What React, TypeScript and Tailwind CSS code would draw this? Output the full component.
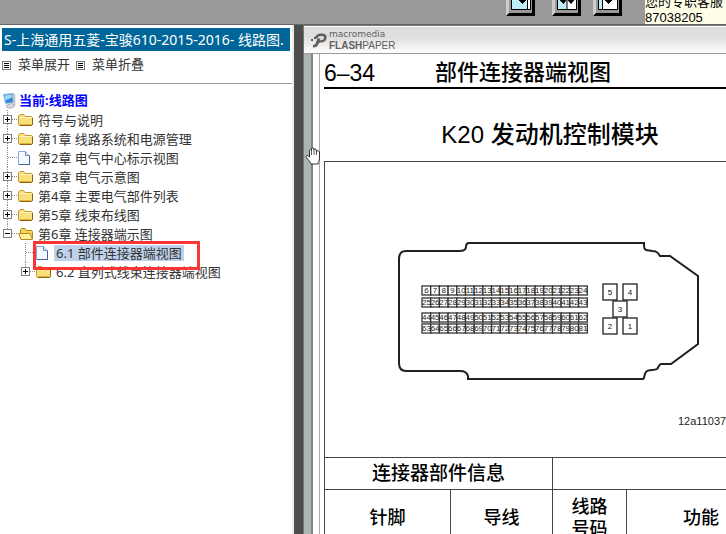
import React from 'react';

type TreeNode = {
  label: string;
  kind: 'folder' | 'open' | 'doc';
  toggle?: 'plus' | 'minus';
  last?: boolean;
  selected?: boolean;
  children?: TreeNode[];
};

const tree: TreeNode[] = [
  { label: '符号与说明', kind: 'folder', toggle: 'plus' },
  { label: '第1章 线路系统和电源管理', kind: 'folder', toggle: 'plus' },
  { label: '第2章 电气中心标示视图', kind: 'doc' },
  { label: '第3章 电气示意图', kind: 'folder', toggle: 'plus' },
  { label: '第4章 主要电气部件列表', kind: 'folder', toggle: 'plus' },
  { label: '第5章 线束布线图', kind: 'folder', toggle: 'plus' },
  {
    label: '第6章 连接器端示图',
    kind: 'open',
    toggle: 'minus',
    last: true,
    children: [
      { label: '6.1 部件连接器端视图', kind: 'doc', selected: true },
      { label: '6.2 直列式线束连接器端视图', kind: 'folder', toggle: 'plus', last: true },
    ],
  },
];

const Joint: React.FC<{ toggle?: 'plus' | 'minus'; last?: boolean }> = ({ toggle, last }) => (
  <svg width="18" height="19" viewBox="0 0 18 19" className="block" shapeRendering="crispEdges">
    <path d={last ? 'M7.5 0V9' : 'M7.5 0V19'} stroke="#8c8c8c" strokeDasharray="1 1" />
    <path d="M8 9.5H18" stroke="#8c8c8c" strokeDasharray="1 1" />
    {toggle && (
      <>
        <rect x="3.5" y="5.5" width="8" height="8" fill="#fff" stroke="#808080" />
        <path d={toggle === 'plus' ? 'M5 9.5H10M7.5 7V12' : 'M5 9.5H10'} stroke="#000" />
      </>
    )}
  </svg>
);

const FolderIcon = () => (
  <svg width="16" height="16" viewBox="0 0 16 16" className="block shrink-0">
    <path d="M.5 4L2 2.5H5.5L7 4.5H13.500L14.5 5.5V12.500L13.500 13.500H1.500L.5 12.500Z" fill="#fae07c" stroke="#c29a2c" />
    <path d="M1.500 5.500H13.500" stroke="#fff7c2" />
    <path d="M1.500 12.500H13.500" stroke="#e0b23a" />
    <path d="M2 13.500H13.500L14.500 12.500V6" fill="none" stroke="#8a6410" />
  </svg>
);

const OpenFolderIcon = () => (
  <svg width="16" height="16" viewBox="0 0 16 16" className="block shrink-0">
    <path d="M2.5 12.5V3.5L3.5 2.5H7L8.5 4.5H13.5L14.5 5.5V12.5Z" fill="#f3cf5b" stroke="#b58a1b" />
    <path d="M0.5 7.5H12L14.5 13.5H3Z" fill="#fff0a0" stroke="#b58a1b" />
  </svg>
);

const DocIcon = () => (
  <svg width="16" height="16" viewBox="0 0 16 16" className="block shrink-0">
    <path d="M.5 1.5H7.5L11.5 5.5V14.5H.5Z" fill="#f4f9ff" stroke="#8fa9d6" />
    <path d="M7.5 1.5V5.5H11.5" fill="#cfe0fa" stroke="#6f8fc4" />
    <path d="M1 14.5H11.5V6" fill="none" stroke="#4464a0" />
  </svg>
);

const ComputerIcon = () => (
  <svg width="16" height="18" viewBox="0 0 16 18" className="block shrink-0">
    <path d="M.5 2.500L9.500 1.500L10.500 10.500L2.500 11.500Z" fill="#2f86d6" stroke="#9cc0e2" />
    <path d="M1.500 3.500L8.500 2.500L9 5.500L2.500 8.500Z" fill="#9fd6fb" />
    <path d="M10 1L12 2.500V13L10.500 11Z" fill="#cfd6e2" stroke="#9aa5b8" strokeWidth=".5" />
    <path d="M3 13.500L8.500 11.500L12 13.500L9.500 16H4.500Z" fill="#d6dae4" stroke="#8c95a8" strokeWidth=".7" />
  </svg>
);

const nodeIcons = { folder: FolderIcon, open: OpenFolderIcon, doc: DocIcon };

const TreeItem: React.FC<{ node: TreeNode }> = ({ node }) => {
  const Icon = nodeIcons[node.kind];
  return (
    <li>
      <div className="relative flex h-[19px] items-center">
        {node.toggle ? (
          <button type="button" aria-label={node.label} className="shrink-0">
            <Joint toggle={node.toggle} last={node.last} />
          </button>
        ) : (
          <Joint last={node.last} />
        )}
        <Icon />
        <a
          href="#"
          className={node.selected ? 'ml-0.5 bg-[#bfd2ec] px-0.5 leading-4 whitespace-nowrap' : 'ml-1 leading-4 whitespace-nowrap'}
        >
          {node.label}
        </a>
        {node.selected && (
          <span className="pointer-events-none absolute -top-0.5 left-[15px] z-10 h-[29px] w-[167px] border-3 border-[#fb3434]"></span>
        )}
      </div>
      {node.children && (
        <ul className="pl-[18px]">
          {node.children.map((child) => (
            <TreeItem key={child.label} node={child} />
          ))}
        </ul>
      )}
    </li>
  );
};

const ListIcon = () => (
  <svg width="9" height="9" viewBox="0 0 9 9" className="shrink-0" shapeRendering="crispEdges">
    <rect x=".5" y=".5" width="8" height="8" fill="#fff" stroke="#777" />
    <path d="M2 2.5H7M2 4.5H7M2 6.5H7" stroke="#000" />
  </svg>
);

const Sidebar = () => (
  <aside className="w-[294px] shrink-0 overflow-hidden border-r-2 border-[#ececec] bg-white font-['Noto_Sans','Noto_Sans_CJK_SC',sans-serif] text-[13px] text-[#333]">
    <h1 className="mx-0.5 mt-[3px] h-[23px] overflow-hidden bg-[#006699] px-0.5 text-sm leading-6 whitespace-nowrap text-white">
      S-上海通用五菱-宝骏610-2015-2016- 线路图.
    </h1>
    <div className="flex h-[33px] items-center border-b border-[#999] px-0.5 pb-1">
      <button type="button" className="flex items-center gap-[7px]">
        <ListIcon />
        菜单展开
      </button>
      <button type="button" className="ml-1.5 flex items-center gap-[7px]">
        <ListIcon />
        菜单折叠
      </button>
    </div>
    <nav className="pt-[7px]">
      <a href="#" className="flex h-[19px] items-center pl-[3px] font-bold text-[#0000ff]">
        <ComputerIcon />
        当前:线路图
      </a>
      <ul>
        {tree.map((node) => (
          <TreeItem key={node.label} node={node} />
        ))}
      </ul>
    </nav>
  </aside>
);

const PageIcon: React.FC<{ kind: 'single' | 'double' | 'right' }> = ({ kind }) => (
  <svg width="20" height="20" viewBox="0 0 20 20" className="block">
    <rect x="1" y="1" width="18" height="18" fill="#fff" />
    {kind === 'single' && <rect x="1" y="1" width="15" height="18" fill="#bdeefa" />}
    {kind === 'double' && <rect x="1" y="1" width="9" height="18" fill="#bdeefa" />}
    {kind === 'right' && <rect x="1" y="1" width="3" height="18" fill="#bdeefa" />}
    <path d="M.5 0V19.5H19.5V0" fill="none" stroke="#000" />
    {kind === 'single' && <path d="M16.5 0V19M8 10H15L11.5 13.5Z" fill="#000" stroke="#000" />}
    {kind === 'double' && <path d="M10 0V19M3 10H9L6.500 13.5ZM11 10H17L14 13.5Z" fill="#000" stroke="#000" />}
    {kind === 'right' && <path d="M4.5 0V19M7 10H14L10.5 13.5Z" fill="#000" stroke="#000" />}
  </svg>
);

const toolClass =
  'mb-2 flex h-[29px] w-[29px] shrink-0 items-start justify-center border-3 border-t-[#ccc] border-r-black border-b-black border-l-[#ccc] bg-[#999]';

const TopBar = () => (
  <header className="flex h-[25px] shrink-0 items-end justify-end overflow-hidden border-b border-[#666] bg-[#999]">
    <button type="button" aria-label="单页" className={toolClass}><PageIcon kind="single" /></button>
    <button type="button" aria-label="双页" className={'ml-[17px] ' + toolClass}><PageIcon kind="double" /></button>
    <button type="button" aria-label="右页" className={'ml-3 ' + toolClass}><PageIcon kind="right" /></button>
    <p className="-mb-0.5 ml-[23px] w-[81px] shrink-0 bg-[#ffffe8] font-['Liberation_Sans','Noto_Sans_CJK_SC',sans-serif] text-[13px] leading-4 whitespace-nowrap text-black">
      您的专职客服<br />
      87038205
    </p>
  </header>
);

const pinRows = [
  { first: 6, y: 125 },
  { first: 25, y: 137 },
  { first: 44, y: 152 },
  { first: 63, y: 163 },
];

const bigPins = [
  { n: 5, x: 279, y: 123 },
  { n: 4, x: 299, y: 123 },
  { n: 3, x: 289, y: 140 },
  { n: 2, x: 279, y: 157 },
  { n: 1, x: 299, y: 157 },
];

const ConnectorDrawing = () => (
  <svg width="451" height="295" viewBox="1 1 451 295" className="block" fontFamily="Liberation Sans, sans-serif">
    <path
      d="M82 90H135C140 90 142 89 142 86C142 83 143 82 145 82H320V85C320 90 324 89 328 90C333 90 334 92 336 95H346L374 115V183L347 203H337C335 203 335 206 333 208C330 210 324 208 322 211C320 213 321 217 319 218H144V215C143 211 140 210 136 210H82Q75 210 75 202V98Q75 90 82 90Z"
      fill="none"
      stroke="#231f20"
      strokeWidth="2"
    />
    {pinRows.map((row) => (
      <g key={row.first}>
        {Array.from({ length: 19 }, (_, i) => (
          <g key={i}>
            <rect x={98 + i * 8.7} y={row.y} width="8.7" height="9" fill="#fff" stroke="#333" strokeWidth="1.3" />
            <text x={102.4 + i * 8.7} y={row.y + 7.4} fontSize="8" textAnchor="middle" fill="#222">
              {row.first + i}
            </text>
          </g>
        ))}
      </g>
    ))}
    {bigPins.map((pin) => (
      <g key={pin.n}>
        <rect x={pin.x} y={pin.y} width="14" height="16" fill="#fff" stroke="#231f20" strokeWidth="1.3" />
        <text x={pin.x + 7} y={pin.y + 11} fontSize="8" textAnchor="middle" fill="#111">{pin.n}</text>
      </g>
    ))}
    <text x="354" y="264" fontSize="11" fill="#222">12a11037</text>
  </svg>
);

const Logo = () => (
  <div className="flex items-center gap-0.5 text-[#5f5f5f]">
    <svg width="16" height="15" viewBox="0 0 16 15">
      <path
        d="M4 5.500C4 2 7 .5 10.500 .5C14.500 .5 16 2.500 15.500 5C15 8.500 12.500 9.500 9.500 9.500C8.500 9.500 8 10 7.500 11C6.500 13.500 5 14.500 2 14.500V12C4 12 4.500 11 5 9.500L6.500 5.500H9.500L8.800 7.300H10C12 7.300 13 6.200 13 4.800C13 3.400 12 3 10 3C8 3 7 3.800 6.500 5.500Z"
        fill="#5f5f5f"
      />
      <path d="M0 6H2V8H0ZM3 4H5V6H3Z" fill="#5f5f5f" />
    </svg>
    <div className="font-['Liberation_Sans',sans-serif] text-[10px] leading-[11px]">
      <div className="font-['DejaVu_Sans',sans-serif] text-[9px]">macromedia</div>
      <div><b>FLASH</b>PAPER</div>
    </div>
  </div>
);

const HandCursor = () => (
  <svg width="17" height="18" viewBox="0 0 17 18" className="pointer-events-none absolute top-[121px] left-px">
    <path
      d="M4.500 10V3.500C4.500 2 6.500 2 6.500 3.500V2C6.500 .5 8.800 .5 8.800 2V3C8.800 1.500 11.300 1.500 11.300 3V4.500C11.300 3.500 14.500 3.500 14.500 5V11C14.500 14 13 15 13 17H6C5.500 15 3 12.500 1 10C.5 8.500 2 8 3 8.800Z"
      fill="#fff"
      stroke="#333"
    />
    <path d="M6.500 3V8M9 3V8M11.500 4V8" stroke="#333" strokeWidth=".8" />
  </svg>
);

const Viewer = () => (
  <main className="relative flex min-w-0 flex-1 flex-col overflow-hidden border-t border-l border-[#777] bg-white">
    <div className="flex h-7 shrink-0 items-center border-t border-b border-t-white border-b-[#999] bg-linear-to-b from-[#dedede] from-40% to-white px-[7px]">
      <Logo />
    </div>
    <div className="flex min-h-0 flex-1">
      <div className="w-[9px] shrink-0 border-r-2 border-r-[#7b8583] bg-[#abb6b4]"></div>
      <div className="w-[7px] shrink-0 border-r border-[#aaa]"></div>
      <article className="min-w-0 flex-1 overflow-hidden pl-1 font-['Liberation_Sans','Noto_Sans_CJK_SC',sans-serif] text-black">
        <div className="w-[452px]">
          <div className="flex h-[35px] items-center border-b-2 border-black pt-1 leading-8">
            <span className="w-[111px] text-[23px]">6–34</span>
            <h2 className="text-[22px] font-medium">部件连接器端视图</h2>
          </div>
          <h3 className="pt-7 pb-2 text-center text-2xl leading-9 font-medium">K20 发动机控制模块</h3>
          <table className="w-full table-fixed border-collapse text-center text-lg font-medium">
            <colgroup>
              <col className="w-[126px]" />
              <col className="w-[102px]" />
              <col className="w-[74px]" />
              <col />
            </colgroup>
            <tbody>
              <tr>
                <td colSpan={4} className="border border-[#444] p-0"><ConnectorDrawing /></td>
              </tr>
              <tr className="h-8">
                <th colSpan={2} className="border border-[#444] p-0 text-[19px] font-medium">连接器部件信息</th>
                <td colSpan={2} className="border border-[#444] p-0"></td>
              </tr>
              <tr className="h-14 leading-[22px]">
                <th className="border border-[#444] p-0 font-medium">针脚</th>
                <th className="border border-[#444] p-0 font-medium">导线</th>
                <th className="border border-[#444] p-0 font-medium">线路<br />号码</th>
                <th className="border border-[#444] p-0 font-medium">功能</th>
              </tr>
            </tbody>
          </table>
        </div>
      </article>
    </div>
    <HandCursor />
  </main>
);

const App: React.FC = () => (
  <div className="flex h-screen flex-col overflow-hidden bg-white">
    <TopBar />
    <div className="flex min-h-0 flex-1">
      <Sidebar />
      <div className="w-[9px] shrink-0 bg-[#4d4d4d]"></div>
      <Viewer />
    </div>
  </div>
);

export default App;
